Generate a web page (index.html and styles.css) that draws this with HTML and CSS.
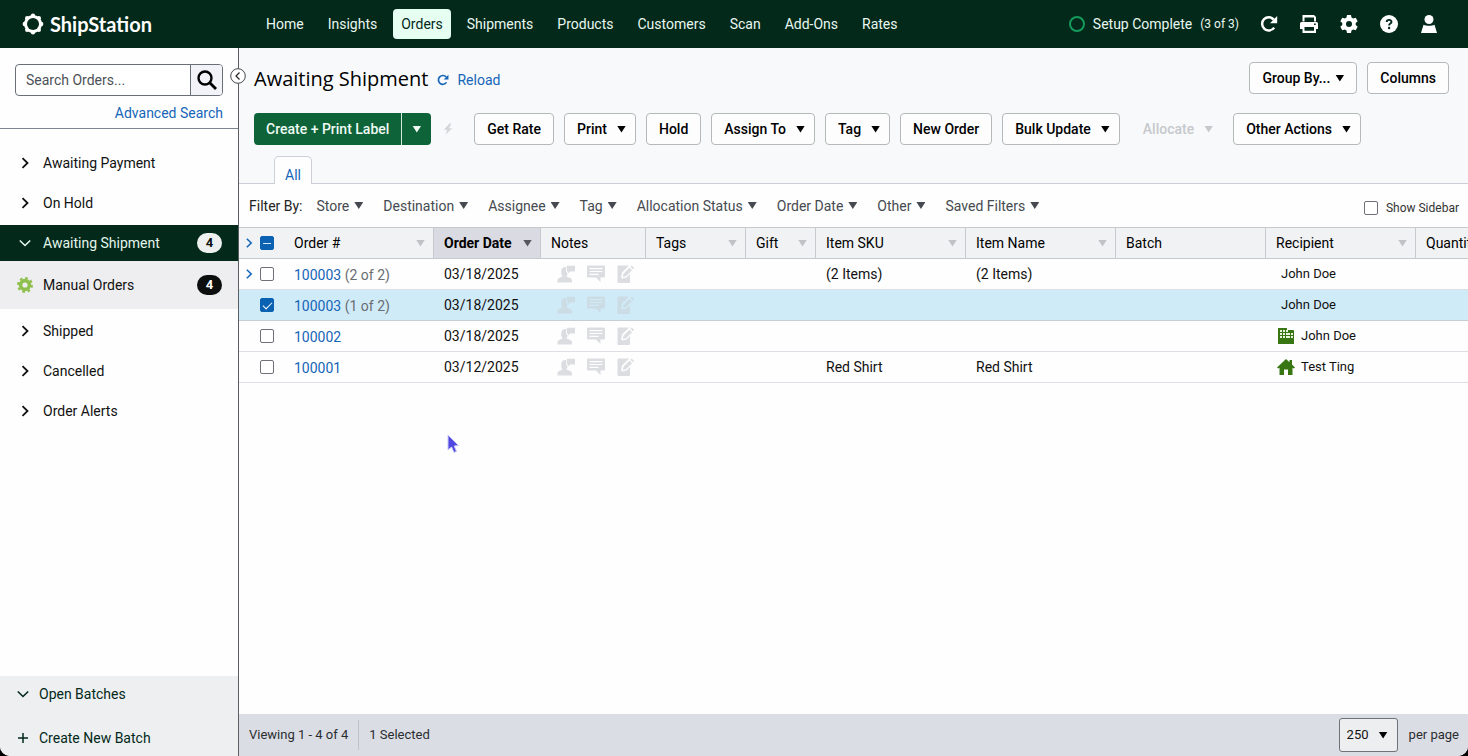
FILE: index.html
```html
<!DOCTYPE html>
<html lang="en">
<head>
<meta charset="utf-8">
<meta name="viewport" content="width=device-width, initial-scale=1">
<title>ShipStation - Awaiting Shipment</title>
<link rel="stylesheet" href="styles.css">
</head>
<body>
<svg class="defs" width="0" height="0" aria-hidden="true">
  <symbol id="chevron-right" viewBox="0 0 16 16"><path d="M5.500 3.200L10.500 8L5.500 12.800" fill="none" stroke="currentColor" stroke-width="1.800"/></symbol>
  <symbol id="chevron-down" viewBox="0 0 16 16"><path d="M2.800 5.500L8 10.500L13.200 5.500" fill="none" stroke="currentColor" stroke-width="1.600"/></symbol>
  <symbol id="reload" viewBox="0 0 18 18"><path d="M14.200 12.600A6.600 6.600 0 1 1 13.800 4.600" fill="none" stroke="currentColor" stroke-width="2.500"/><path d="M17.200 1v7.200H10z" fill="currentColor"/></symbol>
  <symbol id="note-person" viewBox="0 0 18 18"><path d="M0.500 17.500v-2C0.500 13 3.500 12.600 5.600 11.600C4.400 9.800 4 8 4.300 6C4.500 3.500 6 2 8 2h1v4.500L10.500 8C10.400 9.700 10 10.800 9.300 11.600C11.500 12.600 15 13 15 15.500v2z"/><path d="M9.800 0.800H18v5.700h-5L11 8.500V6.500H9.800z"/></symbol>
  <symbol id="note-bubble" viewBox="0 0 18 18"><path fill-rule="evenodd" d="M1 0.500h16a1 1 0 0 1 1 1v10a1 1 0 0 1-1 1h-3.500V17L9 12.500H1a1 1 0 0 1-1-1v-10a1 1 0 0 1 1-1zM2.500 3v1.200h13V3zM2.500 5.900v1.200h13V5.900zM2.500 8.800V10h9V8.800z"/></symbol>
  <symbol id="note-edit" viewBox="0 0 18 18"><path d="M1.500 0.500H12L5 7.500L4 12.500L5.500 13.500L9.500 12.500L13 9V17a1 1 0 0 1-1 1H1.500a1 1 0 0 1-1-1V1.500a1 1 0 0 1 1-1z"/><path d="M6.500 8.700L12.500 2.700L15 5.200L9 11.200L5.800 11.900zM13.500 1.800L14.700 0.600L17.200 3.100L16 4.300z"/></symbol>
</svg>

<div class="app">
  <header class="topbar">
    <a class="brand" href="#">
      <svg class="brand-mark" viewBox="0 0 22 22" aria-hidden="true"><g fill="#fff"><circle cx="11" cy="11" r="9"/><circle cx="11" cy="2.800" r="2.200"/><circle cx="16.800" cy="5.200" r="2.200"/><circle cx="19.200" cy="11" r="2.200"/><circle cx="16.800" cy="16.800" r="2.200"/><circle cx="11" cy="19.200" r="2.200"/><circle cx="5.200" cy="16.800" r="2.200"/><circle cx="2.800" cy="11" r="2.200"/><circle cx="5.200" cy="5.200" r="2.200"/></g><circle cx="11" cy="11" r="6" fill="#02291a"/></svg>
      <span>ShipStation</span>
    </a>
    <nav class="mainnav" aria-label="Main">
      <a href="#">Home</a><a href="#">Insights</a><a class="current" href="#">Orders</a><a href="#">Shipments</a><a href="#">Products</a><a href="#">Customers</a><a href="#">Scan</a><a href="#">Add-Ons</a><a href="#">Rates</a>
    </nav>
    <div class="tools">
      <a class="setup" href="#"><span class="ring"></span><span>Setup Complete</span><small>(3 of 3)</small></a>
      <button aria-label="Refresh"><svg viewBox="0 0 18 18"><use href="#reload"/></svg></button>
      <button aria-label="Print"><svg viewBox="0 0 18 18"><path fill="currentColor" fill-rule="evenodd" d="M2.500 0h11.500l2 2v4.500H14V2.500H4.500v4h-2zM1.500 7h15A1.500 1.500 0 0 1 18 8.500V14h-2v4H2.500v-4H0V8.500A1.500 1.500 0 0 1 1.500 7zM4.500 12v3.800H14V12zM14 8.500v1.600h1.700V8.500z"/></svg></button>
      <button aria-label="Settings"><svg viewBox="0 0 18 18"><path fill="currentColor" fill-rule="evenodd" d="M7 0h4l.5 2.600 1.700 1 2.500-.9 2 3.500-2 1.700v2.200l2 1.700-2 3.500-2.500-.9-1.700 1L11 18H7l-.5-2.600-1.700-1-2.500.9-2-3.500 2-1.700V7.900l-2-1.700 2-3.500 2.500.9 1.700-1zM9 6a3 3 0 1 0 0 6 3 3 0 0 0 0-6z"/></svg></button>
      <button aria-label="Help"><svg viewBox="0 0 18 18"><circle cx="9" cy="9" r="9" fill="currentColor"/><path d="M6.700 7.100C6.700 4.200 11.500 4.200 11.500 7C11.500 8.700 9.100 8.500 9.100 10.600" fill="none" stroke="#02291a" stroke-width="1.900"/><circle cx="9.100" cy="13" r="1.200" fill="#02291a"/></svg></button>
      <button aria-label="Account"><svg viewBox="0 0 18 18"><circle cx="9" cy="4.500" r="4.500" fill="currentColor"/><path fill="currentColor" d="M3.500 9.800C6.500 11.200 11.500 11.200 14.500 9.800L17 18H1z"/></svg></button>
    </div>
  </header>

  <div class="body">
    <aside class="sidebar">
      <form class="search">
        <div class="searchbox">
          <input type="text" placeholder="Search Orders..." aria-label="Search Orders">
          <button type="button" aria-label="Search"><svg viewBox="0 0 20 20"><circle cx="8" cy="8" r="6.500" fill="none" stroke="currentColor" stroke-width="2.400"/><path d="M12.500 12.500L19 19" stroke="currentColor" stroke-width="2.800"/></svg></button>
        </div>
        <a class="link" href="#">Advanced Search</a>
      </form>
      <nav class="statuses" aria-label="Order status">
        <a href="#"><svg><use href="#chevron-right"/></svg>Awaiting Payment</a>
        <a href="#"><svg><use href="#chevron-right"/></svg>On Hold</a>
        <a class="active" href="#"><svg><use href="#chevron-down"/></svg>Awaiting Shipment<b class="count light">4</b></a>
        <a class="store" href="#"><svg viewBox="0 0 16 16"><circle cx="8" cy="8" r="4.400" fill="none" stroke="#8fbf4d" stroke-width="3.600"/><circle cx="8" cy="8" r="7" fill="none" stroke="#8fbf4d" stroke-width="2" stroke-dasharray="2.700 2.800"/></svg>Manual Orders<b class="count dark">4</b></a>
        <a href="#"><svg><use href="#chevron-right"/></svg>Shipped</a>
        <a href="#"><svg><use href="#chevron-right"/></svg>Cancelled</a>
        <a href="#"><svg><use href="#chevron-right"/></svg>Order Alerts</a>
      </nav>
      <div class="batches">
        <button><svg><use href="#chevron-down"/></svg>Open Batches</button>
        <button><svg viewBox="0 0 16 16"><path d="M8 3v10M3 8h10" stroke="currentColor" stroke-width="1.500"/></svg>Create New Batch</button>
      </div>
      <button class="collapse" aria-label="Collapse sidebar"><svg viewBox="0 0 16 16"><circle cx="8" cy="8" r="7.300" fill="#fff" stroke="#45494d"/><path d="M9.500 4.500L6 8L9.500 11.500" fill="none" stroke="#222" stroke-width="1.200"/></svg></button>
    </aside>

    <main class="main">
      <div class="heading">
        <div class="titlebar">
          <h1>Awaiting Shipment</h1>
          <a class="link reload" href="#"><svg viewBox="0 0 18 18"><use href="#reload"/></svg>Reload</a>
          <div class="right">
            <button class="btn">Group By...<i class="caret"></i></button>
            <button class="btn">Columns</button>
          </div>
        </div>
        <div class="actions">
          <div class="split"><button>Create + Print Label</button><button aria-label="More label options"><i class="caret"></i></button></div>
          <button class="bolt" aria-label="Quick ship" disabled><svg viewBox="0 0 12 14"><path d="M8 0L1 8h4L3 14L11 6H7L10 1z" fill="#d3d5d8"/></svg></button>
          <button class="btn">Get Rate</button>
          <button class="btn menu">Print<i class="caret"></i></button>
          <button class="btn">Hold</button>
          <button class="btn menu">Assign To<i class="caret"></i></button>
          <button class="btn menu">Tag<i class="caret"></i></button>
          <button class="btn">New Order</button>
          <button class="btn menu">Bulk Update<i class="caret"></i></button>
          <button class="btn menu" disabled>Allocate<i class="caret"></i></button>
          <button class="btn menu">Other Actions<i class="caret"></i></button>
        </div>
        <div class="tabs"><a href="#">All</a></div>
      </div>

      <div class="filters">
        <span class="label">Filter By:</span>
        <button>Store<i class="caret"></i></button>
        <button>Destination<i class="caret"></i></button>
        <button>Assignee<i class="caret"></i></button>
        <button>Tag<i class="caret"></i></button>
        <button>Allocation Status<i class="caret"></i></button>
        <button>Order Date<i class="caret"></i></button>
        <button>Other<i class="caret"></i></button>
        <button>Saved Filters<i class="caret"></i></button>
        <label class="show"><input type="checkbox">Show Sidebar</label>
      </div>

      <div class="gridwrap">
        <table class="orders">
          <colgroup><col class="w-check"><col class="w-wide"><col class="w-date"><col class="w-notes"><col class="w-tags"><col class="w-gift"><col class="w-wide"><col class="w-wide"><col class="w-wide"><col class="w-wide"><col class="w-tags"></colgroup>
          <thead>
            <tr>
              <th class="pick"><div><svg><use href="#chevron-right"/></svg><input class="partial" type="checkbox" aria-label="Select all"></div></th>
              <th><div>Order #<i class="caret"></i></div></th>
              <th class="sorted"><div>Order Date<i class="caret"></i></div></th>
              <th><div>Notes</div></th>
              <th><div>Tags<i class="caret"></i></div></th>
              <th><div>Gift<i class="caret"></i></div></th>
              <th><div>Item SKU<i class="caret"></i></div></th>
              <th><div>Item Name<i class="caret"></i></div></th>
              <th><div>Batch</div></th>
              <th><div>Recipient<i class="caret"></i></div></th>
              <th><div>Quantity</div></th>
            </tr>
          </thead>
          <tbody>
            <tr>
              <td class="pick"><div><svg><use href="#chevron-right"/></svg><input type="checkbox" aria-label="Select 100003 (2 of 2)"></div></td>
              <td class="num"><a class="link" href="#">100003</a> (2 of 2)</td>
              <td>03/18/2025</td>
              <td><div class="notes"><svg><use href="#note-person"/></svg><svg><use href="#note-bubble"/></svg><svg><use href="#note-edit"/></svg></div></td>
              <td></td><td></td><td>(2 Items)</td><td>(2 Items)</td><td></td>
              <td><div class="who plain">John Doe</div></td><td></td>
            </tr>
            <tr class="selected">
              <td class="pick"><div><span></span><input type="checkbox" checked aria-label="Select 100003 (1 of 2)"></div></td>
              <td class="num"><a class="link" href="#">100003</a> (1 of 2)</td>
              <td>03/18/2025</td>
              <td><div class="notes"><svg><use href="#note-person"/></svg><svg><use href="#note-bubble"/></svg><svg><use href="#note-edit"/></svg></div></td>
              <td></td><td></td><td></td><td></td><td></td>
              <td><div class="who plain">John Doe</div></td><td></td>
            </tr>
            <tr>
              <td class="pick"><div><span></span><input type="checkbox" aria-label="Select 100002"></div></td>
              <td class="num"><a class="link" href="#">100002</a></td>
              <td>03/18/2025</td>
              <td><div class="notes"><svg><use href="#note-person"/></svg><svg><use href="#note-bubble"/></svg><svg><use href="#note-edit"/></svg></div></td>
              <td></td><td></td><td></td><td></td><td></td>
              <td><div class="who"><svg viewBox="0 0 18 18"><path fill="#387614" d="M1 1h9v2h6a1 1 0 0 1 1 1v13H1z"/><path stroke="#e6f2dc" stroke-width="2" stroke-dasharray="2 1" d="M3 4h8M3 7h8M3 10h8M11 7h5M11 10h5"/></svg>John Doe</div></td><td></td>
            </tr>
            <tr>
              <td class="pick"><div><span></span><input type="checkbox" aria-label="Select 100001"></div></td>
              <td class="num"><a class="link" href="#">100001</a></td>
              <td>03/12/2025</td>
              <td><div class="notes"><svg><use href="#note-person"/></svg><svg><use href="#note-bubble"/></svg><svg><use href="#note-edit"/></svg></div></td>
              <td></td><td></td><td>Red Shirt</td><td>Red Shirt</td><td></td>
              <td><div class="who"><svg viewBox="0 0 18 18"><path fill="#387614" d="M9 1L12.500 4.200V2H15v4.500L18 9.500L16.800 10.500L15.500 9.800V17H11v-5.500H7V17H2.500V9.800L1.200 10.500L0 9.500z"/></svg>Test Ting</div></td><td></td>
            </tr>
          </tbody>
        </table>
      </div>

      <footer class="statusbar">
        <span class="viewing">Viewing 1 - 4 of 4</span>
        <span class="chosen">1 Selected</span>
        <label class="pager"><span class="selectbox"><select><option>250</option></select><i class="caret"></i></span>per page</label>
      </footer>
    </main>
  </div>
  <svg class="pointer" viewBox="0 0 12 20" aria-hidden="true"><path d="M1 1V16L4.500 13L7 18.500L9.500 17.300L7.200 12L11.500 11.500z" fill="#5046e0" stroke="#c9cdf5" stroke-width="1"/></svg>
</div>
</body>
</html>
```

FILE: styles.css
```css
* { box-sizing: border-box; }
body { margin: 0; background: #000; color: #111; font: 14px/20px Roboto, "Liberation Sans", sans-serif; }
button, input, select { font: inherit; color: inherit; }
button { border: 0; padding: 0; background: none; }
a { color: inherit; text-decoration: none; }
svg { display: block; flex: none; }
.defs { position: absolute; }
.link { color: #1565b8; }

.caret { width: 9px; height: 7px; background: currentColor; clip-path: polygon(0 0, 100% 0, 50% 100%); flex: none; }

.app { position: relative; display: flex; flex-direction: column; height: 100vh; background: #fdfefd; border-radius: 0 0 10px 10px; overflow: hidden; }

/* Top bar */
.topbar { display: flex; align-items: center; height: 48px; flex: none; padding: 0 29px 0 22px; background: #02291a; color: #e9f7f0; }
.brand { display: flex; align-items: center; gap: 6px; width: 236px; color: #fff; font: 700 20px/24px Lato, sans-serif; }
.brand-mark { width: 22px; height: 22px; }
.mainnav { display: flex; gap: 8px; }
.mainnav a { padding: 5px 8px; border-radius: 4px; }
.mainnav .current { background: #e6fdf2; color: #02291a; }
.tools { display: flex; align-items: center; gap: 20px; margin-left: auto; }
.tools button { display: grid; place-items: center; width: 20px; color: #fff; }
.tools button svg { width: 18px; height: 18px; }
.setup { display: flex; align-items: center; gap: 8px; }
.setup small { font-size: 12px; }
.ring { width: 16px; height: 16px; border: 2px solid #159a5b; border-radius: 50%; }

.body { display: flex; flex: 1; min-height: 0; }

/* Sidebar */
.sidebar { position: relative; display: flex; flex-direction: column; width: 239px; flex: none; border-right: 1px solid #5b5d62; }
.search { display: flex; flex-direction: column; align-items: flex-end; gap: 7px; padding: 16px 15px 5px; border-bottom: 1px solid #7c8592; }
.searchbox { display: flex; width: 100%; height: 32px; border: 1px solid #6a6f78; border-radius: 4px; overflow: hidden; background: #fff; }
.searchbox input { flex: 1; min-width: 0; border: 0; padding: 0 10px; background: none; outline: 0; }
.searchbox input::placeholder { color: #4c5157; opacity: 1; }
.searchbox button { display: grid; place-items: center; width: 32px; border-left: 1px solid #6a6f78; background: #f2f2f8; color: #000; }
.searchbox svg { width: 20px; height: 20px; }
.statuses { display: flex; flex-direction: column; gap: 4px; padding-top: 16px; }
.statuses a { display: flex; align-items: center; gap: 10px; height: 36px; padding: 0 16px 0 17px; }
.statuses svg, .batches svg { width: 16px; height: 16px; }
.statuses .active { background: #02291a; color: #e4f6ec; }
.statuses .store { height: 48px; margin: -4px 0 0; background: #eeeef0; }
.count { margin-left: auto; width: 25px; border-radius: 10px; text-align: center; font-size: 13px; }
.light { background: #eef0ef; color: #111; }
.dark { background: #0c0f0e; color: #fff; }
.batches { display: flex; flex-direction: column; gap: 8px; margin-top: auto; background: #eeeff0; }
.batches button { display: flex; align-items: center; gap: 8px; height: 36px; padding: 0 15px; color: #02291a; }
.collapse { position: absolute; top: 20px; right: -8px; z-index: 1; }
.collapse svg { width: 16px; height: 16px; }

/* Heading and actions */
.main { display: flex; flex-direction: column; flex: 1; min-width: 0; }
.heading { background: #f8f9fb; border-bottom: 1px solid #ccced8; }
.titlebar { display: flex; align-items: center; padding: 14px 19px 0 15px; }
h1 { margin: 0; padding-top: 2px; font: 400 20px/30px "Open Sans", sans-serif; color: #000; }
.reload { display: flex; align-items: center; gap: 8px; margin-left: 9px; padding-top: 4px; }
.reload svg { width: 12px; height: 12px; }
.right { display: flex; gap: 10px; margin-left: auto; }
.btn { display: flex; align-items: center; gap: 5px; height: 32px; padding: 0 12px; border: 1px solid #b5b9b9; border-radius: 4px; background: #fdfdfe; color: #000; font-weight: 500; white-space: nowrap; }
.btn.menu { gap: 10px; padding-right: 9px; }
.btn:disabled { border-color: transparent; background: none; color: #c6c9cb; }
.actions { display: flex; gap: 10px; padding: 19px 15px 0; }
.split { display: flex; gap: 1px; border-radius: 4px; overflow: hidden; background: #d5eadf; }
.split button { display: flex; align-items: center; height: 32px; padding: 0 12px; background: #0e6339; color: #effbf4; font-weight: 500; }
.split button + button { padding: 0 10px; }
.bolt { display: grid; place-items: center start; width: 23px; padding-left: 2px; }
.bolt svg { width: 10px; height: 12px; }
.tabs { display: flex; padding: 11px 35px 0; }
.tabs a { height: 28px; margin-bottom: -1px; padding: 8px 10px 0; border: 1px solid #ccced8; border-bottom: 0; border-radius: 5px 5px 0 0; background: #fdfefd; color: #1565b8; }

/* Filters */
.filters { display: flex; align-items: center; gap: 20px; height: 43px; flex: none; padding: 0 9px 0 10px; color: #464a50; white-space: nowrap; }
.filters .label { margin-right: -6px; color: #222; }
.filters button { display: flex; align-items: center; gap: 5px; }
.show { display: flex; align-items: center; gap: 8px; margin-left: auto; padding-top: 4px; font-size: 12px; color: #333; }

input[type="checkbox"] { display: grid; place-items: center; appearance: none; width: 14px; height: 14px; margin: 0; border: 1px solid #6e7278; border-radius: 2px; background: #fff; flex: none; }
input[type="checkbox"]:checked, input[type="checkbox"].partial { border-color: #0b62b3; background: #0b62b3; }
input:checked::before { content: ""; width: 8px; height: 4px; border: solid #fff; border-width: 0 0 1px 1px; transform: translateY(-1px) rotate(-45deg); }
input.partial::before { content: ""; width: 8px; height: 1px; background: #d9ebfa; }

/* Order grid */
.gridwrap { flex: 1; min-height: 0; overflow: hidden; }
.orders { table-layout: fixed; width: 1277px; border-collapse: separate; border-spacing: 0; }
.w-check { width: 45px; }
.w-wide { width: 150px; }
.w-date { width: 107px; }
.w-notes { width: 105px; }
.w-tags { width: 100px; }
.w-gift { width: 70px; }
th { height: 32px; padding: 0 8px 0 10px; border: solid #c6cacf; border-width: 1px 1px 1px 0; background: #f0f2f4; font-weight: 400; text-align: left; color: #000; }
th.pick { border-right: 0; }
th > div { display: flex; align-items: center; justify-content: space-between; }
th .caret { color: #bfc3c6; }
th.sorted { background: #d9dae2; font-weight: 700; }
th.sorted .caret { color: #55595e; }
td { height: 31px; padding: 0 10px; border-bottom: 1px solid #dddfe4; white-space: nowrap; }
.orders .pick { padding: 0; color: #1565b8; }
.pick > div { display: grid; grid-template-columns: 21px 14px; align-items: center; justify-content: start; }
.pick svg { width: 16px; height: 14px; margin-left: 2px; }
.num { padding-top: 2px; color: #6a6d72; }
.selected td { background: #d0ebf8; border-bottom-color: #c3ced6; }
.notes { display: flex; gap: 12px; padding-left: 6px; fill: #dcdde1; }
.notes svg { width: 18px; height: 18px; }
.selected .notes { fill: #ccdce4; }
.who { display: flex; align-items: center; gap: 6px; padding-left: 1px; font-size: 13px; }
.who svg { width: 18px; height: 18px; }
.plain { padding-left: 5px; }

/* Status bar */
.statusbar { display: flex; align-items: center; height: 42px; flex: none; padding: 0 9px 0 10px; background: #dadde4; font-size: 13px; color: #2a2d30; }
.viewing { padding: 5px 10px 5px 0; border-right: 1px solid #bfc2c9; }
.chosen { padding-left: 10px; }
.pager { display: flex; align-items: center; gap: 11px; margin-left: auto; }
.selectbox { display: grid; align-items: center; }
.selectbox > * { grid-area: 1 / 1; }
.selectbox select { appearance: none; width: 59px; height: 34px; padding: 0 7px; border: 1px solid #6d7378; border-radius: 3px; background: #edeef0; color: #111; }
.selectbox .caret { justify-self: end; margin-right: 10px; color: #000; pointer-events: none; }

.pointer { position: absolute; left: 447px; top: 434px; width: 12px; height: 20px; }
```
